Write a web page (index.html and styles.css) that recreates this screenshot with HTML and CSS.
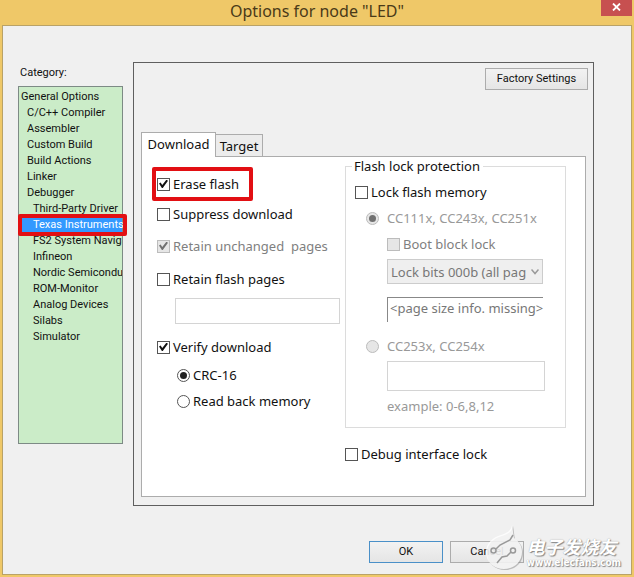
FILE: index.html
```html
<!DOCTYPE html>
<html lang="en">
<head>
<meta charset="utf-8">
<title>Options for node "LED"</title>
<link rel="stylesheet" href="styles.css">
</head>
<body>
<div class="window">
  <header class="titlebar">
    <h1 class="title">Options for node "LED"</h1>
    <button class="close" type="button" aria-label="Close">
      <svg width="9" height="8" viewBox="0 0 9 8"><path d="M1 .5 8 7.500M8 .5 1 7.500" stroke="#fff" stroke-width="1.800" fill="none"/></svg>
    </button>
  </header>
  <main class="body">
    <div class="columns">
      <nav class="sidebar">
        <h2 class="label">Category:</h2>
        <ul class="list">
          <li>General Options</li>
          <li class="l1">C/C++ Compiler</li>
          <li class="l1">Assembler</li>
          <li class="l1">Custom Build</li>
          <li class="l1">Build Actions</li>
          <li class="l1">Linker</li>
          <li class="l1">Debugger</li>
          <li class="l2">Third-Party Driver</li>
          <li class="l2 selected">Texas Instruments</li>
          <li class="l2">FS2 System Navigator</li>
          <li class="l2">Infineon</li>
          <li class="l2">Nordic Semiconductor</li>
          <li class="l2">ROM-Monitor</li>
          <li class="l2">Analog Devices</li>
          <li class="l2">Silabs</li>
          <li class="l2">Simulator</li>
        </ul>
      </nav>
      <section class="panel">
        <div class="panel-top"><button class="btn factory" type="button">Factory Settings</button></div>
        <div class="tabs">
          <button class="tab active" type="button">Download</button>
          <button class="tab" type="button">Target</button>
        </div>
        <div class="page">
          <div class="left">
            <div class="marked"><label class="row"><input type="checkbox" checked>Erase flash</label></div>
            <label class="row suppress"><input type="checkbox">Suppress download</label>
            <label class="row dim unchanged"><input type="checkbox" checked disabled>Retain unchanged&nbsp; pages</label>
            <label class="row retain"><input type="checkbox">Retain flash pages</label>
            <input class="text pages" type="text" aria-label="Flash pages">
            <label class="row verify"><input type="checkbox" checked>Verify download</label>
            <label class="row mode"><input type="radio" name="verify" checked>CRC-16</label>
            <label class="row mode"><input type="radio" name="verify">Read back memory</label>
          </div>
          <div class="right">
            <fieldset class="group">
              <legend>Flash lock protection</legend>
              <label class="row"><input type="checkbox">Lock flash memory</label>
              <label class="row faint chip"><input type="radio" name="chip" checked disabled>CC111x, CC243x, CC251x</label>
              <div class="nested">
                <label class="row dim"><input type="checkbox" disabled>Boot block lock</label>
                <div class="combo">
                  <select disabled aria-label="Lock bits"><option>Lock bits 000b (all pag</option></select>
                  <svg width="8" height="6" viewBox="0 0 8 6"><path d="M.5 .5 4 4.500 7.500 .5" stroke="#999" stroke-width="1.500" fill="none"/></svg>
                </div>
                <div class="info">&lt;page size info. missing&gt;</div>
              </div>
              <label class="row faint chip second"><input type="radio" name="chip" disabled>CC253x, CC254x</label>
              <div class="nested">
                <input class="text range" type="text" disabled aria-label="Page range">
                <div class="faint example">example: 0-6,8,12</div>
              </div>
            </fieldset>
            <label class="row debug"><input type="checkbox">Debug interface lock</label>
          </div>
        </div>
      </section>
    </div>
    <footer class="actions">
      <button class="btn ok" type="button">OK</button>
      <button class="btn" type="button">Cancel</button>
    </footer>
  </main>
  <div class="watermark">
    <svg width="40" height="48" viewBox="0 0 40 48">
      <path d="M27 2c1 5 1 9 2 13 5 3 8 8 8 14 0 10-8 17-18 17S1 39 1 29c0-9 7-15 15-17 6-2 10-4 11-10z" fill="#888" fill-opacity=".5" transform="translate(1 1)"/>
      <path d="M27 2c1 5 1 9 2 13 5 3 8 8 8 14 0 10-8 17-18 17S1 39 1 29c0-9 7-15 15-17 6-2 10-4 11-10z" fill="#fff" fill-opacity=".8"/>
      <g fill="none" stroke="#999" stroke-width="1.500"><path d="M11 26l4-4 10-5 3-5M26 29l-4 4-5 1-5 6"/><circle cx="8.500" cy="27.500" r="2.500"/><circle cx="28" cy="27.500" r="2.500"/></g>
    </svg>
    <div class="wm-text"><span class="wm-name">电子发烧友</span><span class="wm-url">www.elecfans.com</span></div>
  </div>
</div>
</body>
</html>
```
FILE: styles.css
```css
* { box-sizing: border-box; }
body { margin: 0; font: 13px/16px "Noto Sans", sans-serif; color: #111; background: #efc868; }
button, input, select { font: inherit; color: inherit; margin: 0; }
.window { position: relative; min-height: 100vh; padding: 0 2px 2px; display: flex; flex-direction: column; }
.titlebar { height: 25px; display: flex; justify-content: center; position: relative; }
.title { margin: 0; font-size: 16px; line-height: 22px; font-weight: 400; color: #4a3a18; }
.close { position: absolute; right: 0; top: 0; width: 31px; height: 16px; border: 0; padding: 0 0 3px; background: #c75050; display: flex; align-items: center; justify-content: center; }
.body { flex: 1; background: #f0f0f0; border: 1px solid #b9a267; padding: 36px 37px 0 15px; display: flex; flex-direction: column; }
.columns { display: flex; gap: 10px; align-items: flex-start; }
.sidebar { width: 105px; font: 11px/16px Roboto, sans-serif; }
.label { margin: 3px 0 5px 2px; font: inherit; }
.list { list-style: none; margin: 0; padding: 2px 0 0; height: 358px; border: 1px solid #7d8a85; background: #cbecc8; }
.list li { height: 16px; padding-left: 2px; white-space: nowrap; overflow: hidden; }
.list .l1 { padding-left: 8px; }
.list .l2 { padding-left: 14px; }
.list .selected { background: #3399ff; color: #fff; position: relative; overflow: visible; }
.selected::after { content: ""; position: absolute; inset: -3px -5px -3px -1px; border: 4px solid #e20f13; border-radius: 2px; }
.panel { flex: 1; min-width: 0; border: 1px solid #5f5f5f; padding: 5px 7px 8px; }
.panel-top { display: flex; justify-content: flex-end; height: 64px; margin-right: -2px; }
.btn { width: 74px; height: 22px; border: 1px solid #acacac; padding: 0; background: linear-gradient(#f2f2f2, #e5e5e5); font: 11px/16px Roboto, sans-serif; }
.factory { width: 103px; }
.ok { border-color: #4a90c8; }
.tabs { display: flex; align-items: flex-end; height: 25px; margin-bottom: -1px; position: relative; }
.tab { height: 23px; width: 47px; padding: 0; border: 1px solid #acacac; background: #ececec; border-left: 0; }
.tab.active { width: 75px; height: 25px; background: #fff; border-left: 1px solid #acacac; border-bottom: 0; padding-bottom: 2px; }
.page { background: #fff; border: 1px solid #acacac; height: 341px; display: grid; grid-template-columns: 203px 1fr; padding: 0 19px 0 0; }
.row { display: flex; align-items: center; gap: 3px; height: 16px; white-space: nowrap; }
.dim { color: #808080; }
.faint { color: #999; }
.left { padding: 10px 4px 0 10px; }
.left > .row { margin-left: 5px; }
.marked { width: 101px; height: 34px; border: 4px solid #e20f13; border-radius: 2px; padding: 5px 1px; }
.left > .suppress { margin-top: 5px; }
.left > .unchanged { margin-top: 16px; }
.left > .retain { margin-top: 17px; }
.left > .verify { margin-top: 15px; }
.left > .mode { margin: 12px 0 0 25px; }
.left > .mode + .mode { margin-top: 10px; }
input[type=checkbox], input[type=radio] { appearance: none; width: 13px; height: 13px; flex: none; border: 1px solid #555; background: #fff; display: grid; place-items: center; }
input[type=radio] { border-radius: 50%; }
input[type=checkbox]:checked::before { content: ""; width: 9px; height: 9px; background: #111; clip-path: polygon(0 44%, 18% 34%, 36% 60%, 82% 4%, 100% 14%, 42% 94%, 32% 94%); }
input[type=radio]:checked::before { content: ""; width: 7px; height: 7px; border-radius: 50%; background: #222; }
input:disabled:not(.text) { border-color: #bcbcbc; background: #e6e6e6; }
input:disabled:checked::before { background: #707070 !important; }
.text { border: 1px solid #d4d4d4; background: #fff; padding: 0 4px; display: block; }
.pages { width: 165px; height: 26px; margin: 11px 0 0 23px; }
.right { padding-top: 1px; min-width: 0; }
.group { margin: 0; padding: 0 20px 0 9px; border: 1px solid #dcdcdc; height: 270px; min-width: 0; }
.group legend { padding: 0 3px 0 2px; margin-left: -3px; }
.group > .row { margin-top: 10px; }
.group > .chip { margin: 10px 0 0 11px; gap: 8px; }
.group > .second { margin-top: 16px; }
.nested { margin: 10px 0 0 32px; }
.combo { position: relative; margin-top: 7px; height: 25px; width: 156px; }
.combo select { appearance: none; width: 100%; height: 100%; border: 1px solid #ccc; background: #efefef; color: #777; padding: 0 3px; opacity: 1; }
.combo svg { position: absolute; right: 4px; top: 10px; }
.info { margin-top: 13px; height: 25px; width: 156px; border: 1px solid #888; border-width: 1px 0 0 1px; padding: 2px; color: #777; white-space: nowrap; }
.second + .nested { margin-top: 7px; }
.range { width: 158px; height: 30px; }
.example { margin-top: 7px; }
.debug { margin-top: 18px; }
.actions { display: flex; gap: 7px; justify-content: flex-end; margin: 35px 70px 0 0; }
.watermark { position: absolute; right: 13px; bottom: 6px; display: flex; gap: 2px; align-items: flex-end; }
.wm-text { display: flex; flex-direction: column; padding-bottom: 2px; color: #fff; text-shadow: 1px 1px 1px #888, 0 0 1px #999; }
.wm-name { font: italic 700 18px/20px "Noto Sans CJK SC", sans-serif; }
.wm-url { font: 700 10px/13px "DejaVu Sans Condensed", "Noto Sans", sans-serif; }
```
